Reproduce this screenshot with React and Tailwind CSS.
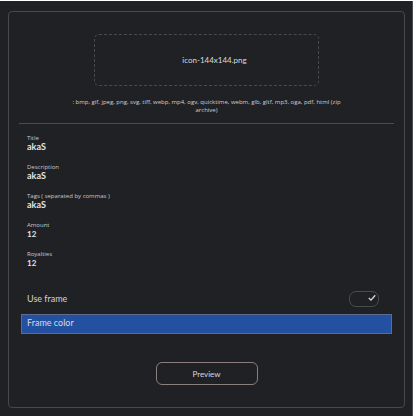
import { useState } from "react";

const initialFields = [
  { id: "title", label: "Title", value: "akaS" },
  { id: "description", label: "Description", value: "akaS" },
  { id: "tags", label: "Tags ( separated by commas )", value: "akaS" },
  { id: "amount", label: "Amount", value: "12", numeric: true },
  { id: "royalties", label: "Royalties", value: "12", numeric: true },
];

function Field({ id, label, value, numeric }) {
  const [text, setText] = useState(value);
  return (
    <div className="flex flex-col">
      <label htmlFor={id} className="font-['Open_Sans',sans-serif] text-[6px] leading-[8px] text-[#c9c9ca]">
        {label}
      </label>
      <input
        id={id}
        type="text"
        inputMode={numeric ? "numeric" : "text"}
        value={text}
        onChange={(e) => setText(e.target.value)}
        className={`h-[10px] w-full bg-transparent leading-[10px] font-bold text-[#e4e4e4] outline-none ${
          numeric ? "text-[8px]" : "text-[9px]"
        }`}
      />
    </div>
  );
}

function FrameSwitch() {
  const [on, setOn] = useState(true);
  return (
    <div className="flex items-center justify-between pr-[13px] pl-[6px]">
      <label htmlFor="use-frame" className="text-[9px] leading-[12px] text-[#d2d2d3]">
        Use frame
      </label>
      <span className="relative flex h-4 w-[30px]">
        <input
          id="use-frame"
          type="checkbox"
          checked={on}
          onChange={(e) => setOn(e.target.checked)}
          className="h-4 w-[30px] appearance-none rounded-[7px] border border-[#4a4b4f]"
        />
        {on && (
          <svg
            viewBox="0 0 8 8"
            className="pointer-events-none absolute top-[3px] right-[3px] h-2 w-2"
            fill="none"
            stroke="#dcdcdc"
            strokeWidth="1.3"
          >
            <path d="M0.8 4 L3 6.1 L7.2 1.3" />
          </svg>
        )}
      </span>
    </div>
  );
}

export default function App() {
  return (
    <div className="min-h-screen bg-white pt-px pr-[5px] font-['Lato','Open_Sans',sans-serif]">
      <main className="min-h-[calc(100vh-1px)] border-r border-[#4a4b4f] bg-[#202125] pt-[10px] pr-[7px] pb-[8px] pl-[8px]">
        <form
          onSubmit={(e) => e.preventDefault()}
          className="flex flex-col rounded-[4px] border border-[#47484c] px-[10px] pt-[22px] pb-[22px]"
        >
          <button
            type="button"
            className="mx-[75px] h-[52px] rounded-[5px] border border-dashed border-[#48494d] pl-4 text-[8px] leading-[12px] text-[#dadada]"
          >
            icon-144x144.png
          </button>
          <p className="mx-[50px] mt-3 text-center font-['Open_Sans',sans-serif] text-[6px] leading-[8px] text-[#d0d0d0]">
            : bmp, gif, jpeg, png, svg, tiff, webp, mp4, ogv, quicktime, webm, glb, gltf, mp3, oga, pdf, html (zip archive)
          </p>
          <hr className="mt-[9px] border-[#4a4b4f]" />
          <div className="mt-[10px] flex flex-col gap-[11px] px-2">
            {initialFields.map((field) => (
              <Field key={field.id} {...field} />
            ))}
          </div>
          <div className="mt-[23px] mr-[2px] ml-[2px] flex flex-col gap-[7px]">
            <FrameSwitch />
            <button
              type="button"
              className="flex h-5 border border-[#5b6b92] bg-[#2450a2] px-[5px] pt-[2px] text-left text-[9px] leading-[12px] text-[#d5dbea]"
            >
              Frame color
            </button>
          </div>
          <button
            type="submit"
            className="mt-7 h-[23px] w-[102px] self-center rounded-[6px] border border-[#8a7f7c] text-[8px] leading-[10px] text-[#dadada]"
          >
            Preview
          </button>
        </form>
      </main>
    </div>
  );
}
